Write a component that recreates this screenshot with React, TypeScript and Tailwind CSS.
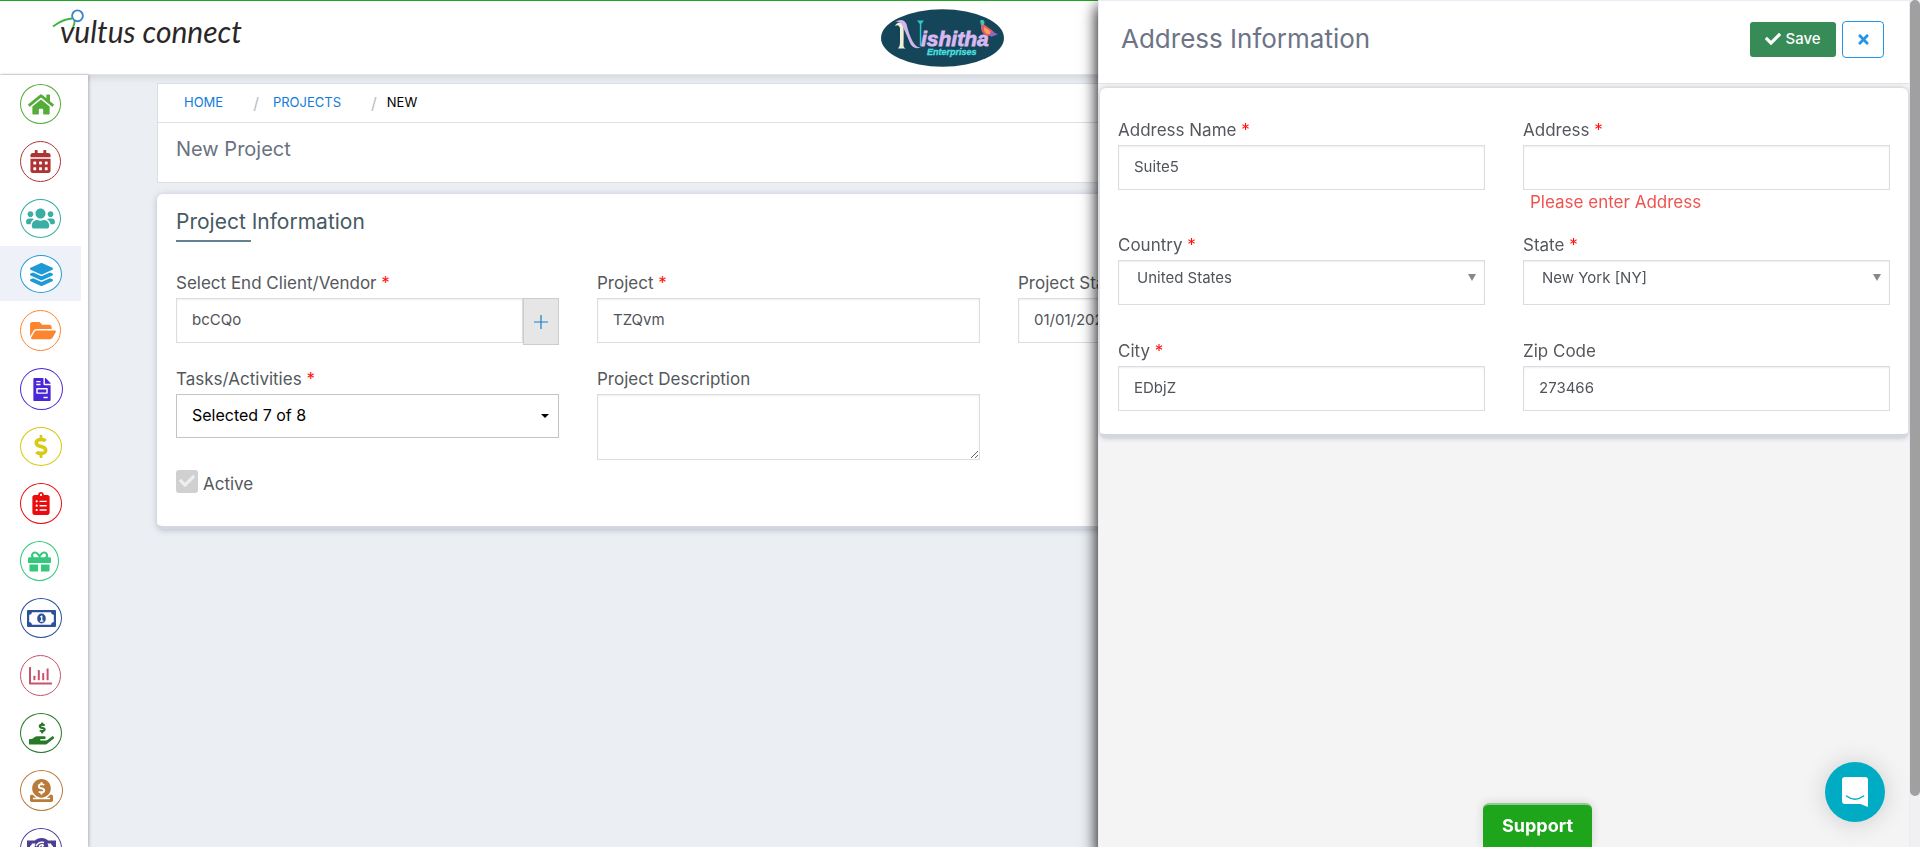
import type { ReactNode } from "react";
import {
  FaHome,
  FaCalendarAlt,
  FaUsers,
  FaLayerGroup,
  FaFolderOpen,
  FaFileInvoice,
  FaDollarSign,
  FaClipboardList,
  FaGift,
  FaHandHoldingUsd,
  FaDonate,
  FaCheck,
  FaTimes,
} from "react-icons/fa";

function MoneyIcon() {
  return (
    <svg viewBox="0 0 29 17" className="h-[17px] w-[29px]" fill="currentColor" aria-hidden="true">
      <path
        fillRule="evenodd"
        d="M1 0H28Q29 0 29 1V16Q29 17 28 17H1Q0 17 0 16V1Q0 0 1 0ZM5 2.2A3 3 0 0 1 2.2 5V12A3 3 0 0 1 5 14.8H24A3 3 0 0 1 26.8 12V5A3 3 0 0 1 24 2.2Z"
      />
      <ellipse cx="14.5" cy="8.5" rx="4.3" ry="5" />
      <path d="M13 6.5L14.6 5.4H15.4V10.6H16.4V11.7H13V10.6H14V7.2L13.4 7.5Z" fill="#fff" />
    </svg>
  );
}

function ChartIcon() {
  return (
    <svg viewBox="0 0 23 18" className="h-[18px] w-[23px]" fill="currentColor" aria-hidden="true">
      <path d="M0 .5Q0 0 .5 0H1.5Q2 0 2 .5V15.6H22.5Q23 15.6 23 16V17Q23 17.6 22.5 17.6H1Q0 17.6 0 16.6Z" />
      <rect x="4.4" y="8.8" width="2" height="4.4" rx=".4" />
      <rect x="8.8" y="3" width="2" height="10.2" rx=".4" />
      <rect x="13.2" y="6" width="2" height="7.2" rx=".4" />
      <rect x="17.6" y="1.4" width="2" height="11.8" rx=".4" />
    </svg>
  );
}

function CashIcon() {
  return (
    <svg viewBox="0 0 29 21" className="h-[21px] w-[29px]" fill="currentColor" aria-hidden="true">
      <path
        fillRule="evenodd"
        d="M0 2.500H8Q10 0 14.5 0Q19 0 21 2.500H29V18H21Q19 21 14.5 21Q10 21 8 18H0ZM5 5.500Q4.500 7.500 3 8V13Q4.500 13.500 5 15H8.500Q6.500 10.500 8.500 5.500ZM24 5.500Q24.500 7.500 26 8V13Q24.500 13.500 24 15H20.500Q22.500 10.500 20.500 5.500Z"
      />
      <path d="M9 8Q12 3 17 4.500M17 7.500Q13 6 12.500 8.500Q12.500 10 14.500 10.500Q17.500 11.300 17 13.500Q16 16 12 14.500M15.500 6V17" fill="none" stroke="#fff" strokeWidth="1.500" />
    </svg>
  );
}

const navItems: { label: string; color: string; size: string; icon: ReactNode; active?: boolean }[] = [
  { label: "Home", color: "text-[#55ac38]", size: "h-[40px] w-[41px]", icon: <FaHome className="h-[23px] w-[26px]" /> },
  { label: "Calendar", color: "text-[#ae3434]", size: "h-[41px] w-[41px]", icon: <FaCalendarAlt className="h-[23px] w-[21px]" /> },
  { label: "Employees", color: "text-[#3aaea3]", size: "h-[39px] w-[41px]", icon: <FaUsers className="h-[23px] w-[29px]" /> },
  { label: "Projects", color: "text-[#1e9bd7]", size: "h-[38px] w-[42px]", icon: <FaLayerGroup className="h-[23px] w-[23px]" />, active: true },
  { label: "Folders", color: "text-[#fd8530]", size: "h-[41px] w-[41px]", icon: <FaFolderOpen className="ml-1 h-[23px] w-[26px]" /> },
  { label: "Invoices", color: "text-[#4a27d6]", size: "h-[42px] w-[43px]", icon: <FaFileInvoice className="h-[23px] w-[18px]" /> },
  { label: "Payments", color: "text-[#d8c913]", size: "h-[39px] w-[42px]", icon: <FaDollarSign className="h-[23px] w-[14px]" /> },
  { label: "Tasks", color: "text-[#ec0c0c]", size: "h-[41px] w-[42px]", icon: <FaClipboardList className="h-[23px] w-[18px]" /> },
  { label: "Benefits", color: "text-[#35c87c]", size: "h-[40px] w-[39px]", icon: <FaGift className="h-[23px] w-[23px]" /> },
  { label: "Payroll", color: "text-[#2c5299]", size: "h-[40px] w-[42px]", icon: <MoneyIcon /> },
  { label: "Reports", color: "text-[#c9516a]", size: "h-[41px] w-[41px]", icon: <ChartIcon /> },
  { label: "Loans", color: "text-[#267a26]", size: "h-[40px] w-[42px]", icon: <FaHandHoldingUsd className="h-[23px] w-[25px]" /> },
  { label: "Donations", color: "text-[#b97a3a]", size: "h-[41px] w-[43px]", icon: <FaDonate className="h-[23px] w-[23px]" /> },
  { label: "Cash", color: "text-[#4d3d96]", size: "h-[41px] w-[42px]", icon: <CashIcon /> },
];

const INPUT =
  "block h-[45px] w-full border border-[#dadde2] bg-white px-[15px] pb-[3px] text-[15px] text-[#50545a] shadow-[inset_0_1px_2px_rgba(0,0,0,0.07)] outline-none";

function Label({ htmlFor, required, children }: { htmlFor: string; required?: boolean; children: ReactNode }) {
  return (
    <label htmlFor={htmlFor} className="block h-[27px] whitespace-nowrap text-[17px] leading-6 text-[#54585c]">
      {children}
      {required && <span className="text-[#ff1010]"> *</span>}
    </label>
  );
}

function SelectField({ id, value }: { id: string; value: string }) {
  return (
    <div className="relative">
      <select id={id} className={INPUT + " appearance-none pl-[18px] pb-[8px]"} defaultValue={value}>
        <option>{value}</option>
      </select>
      <svg viewBox="0 0 8 7" className="pointer-events-none absolute top-[14px] right-[9px] h-[7px] w-2" fill="#888" aria-hidden="true">
        <path d="M0 0H8L4 7Z" />
      </svg>
    </div>
  );
}

function Brand() {
  return (
    <a href="#" className="relative ml-[60px] block justify-self-start pt-[6px] text-[30px] leading-8 text-[#2b2727] italic font-['Lato',sans-serif]">
      vultus connect
      <svg viewBox="0 0 34 20" className="absolute top-0 -left-2 h-5 w-[34px]" fill="none" aria-hidden="true">
        <path d="M1 17.500Q11 10 20 9.500" stroke="#3fb63f" strokeWidth="1.800" />
        <path d="M22.500 11Q23 14.500 21 18" stroke="#3fb63f" strokeWidth="1.800" />
        <circle cx="25.500" cy="6.800" r="5.400" stroke="#3d86c6" strokeWidth="1.900" />
      </svg>
    </a>
  );
}

function CompanyLogo() {
  return (
    <svg viewBox="0 0 123 58" className="h-[58px] w-[123px]" role="img" aria-label="Nishitha Enterprises">
      <ellipse cx="61.500" cy="29" rx="61.500" ry="28.700" fill="#154558" />
      <path d="M14 17Q16 12 22 14Q23 17 22.500 36Q22.500 39 25 39.500H17Q19 38 19 34V19Q18 15 14 17Z" fill="#eef1d6" />
      <path d="M14 13Q22 8 25.500 15Q28 26 32 33Q35 38.500 40 38.500Q32 41 29 34Q24 22 21 16Q19 12 14 13Z" fill="#d3b4ee" />
      <path d="M36 11.500H43L40.300 15V37H38.800V15Z" fill="#35c5cf" />
      <text
        x="40"
        y="37"
        fontFamily="Liberation Sans, sans-serif"
        fontSize="21"
        fontWeight="700"
        fontStyle="italic"
        fill="#d9b8f2"
        stroke="#d9b8f2"
        strokeWidth=".8"
      >
        ishitha
      </text>
      <text x="46" y="46" fontFamily="Liberation Sans, sans-serif" fontSize="9" fontWeight="700" fontStyle="italic" fill="#4be0e0" stroke="#4be0e0" strokeWidth=".3">
        Enterprises
      </text>
      <path d="M99 12Q102 9 103.500 13L103 17L100 16Z" fill="#3fc4b4" />
      <path d="M100 16L104 16Q110 20 116 26L107 27Q99 25 100 16Z" fill="#e9586a" />
      <path d="M103 18Q108 20 111 25L106 25Q102 22 103 18Z" fill="#f3a25c" />
      <path d="M109 23L117 25L110 28Z" fill="#7d6bd0" />
    </svg>
  );
}

function Sidebar() {
  return (
    <nav aria-label="Main" className="relative z-10 w-[88px] shrink-0 overflow-hidden bg-white shadow-[1px_0_3px_rgba(0,0,0,0.25)]">
      {navItems.map((item) => (
        <a
          key={item.label}
          href="#"
          aria-label={item.label}
          className={"block w-[81px] pt-[9px] pb-2 pl-5 " + item.color + (item.active ? " bg-[#eff1f8]" : "")}
        >
          <span className={"flex items-center justify-center rounded-[50%] border border-current bg-white " + item.size}>{item.icon}</span>
        </a>
      ))}
    </nav>
  );
}

function ProjectForm() {
  return (
    <section className="mt-[11px] rounded-md border-b-[3px] border-[#d3d7df] bg-white px-[19px] pt-3 shadow-[0_1px_6px_rgba(60,70,90,0.3)]">
      <h2 className="h-[34px] text-[21px] leading-8 text-[#475a64]">Project Information</h2>
      <div className="h-[2px] w-[75px] bg-[#64828f]" />
      <div className="mt-[29px] grid grid-cols-4 gap-x-[38px] gap-y-6">
        <div>
          <Label htmlFor="client" required>Select End Client/Vendor</Label>
          <div className="flex h-[45px]">
            <input id="client" className={INPUT + " min-w-0 flex-1"} defaultValue="bcCQo" />
            <button type="button" aria-label="Add client" className="flex h-[47px] w-9 items-center justify-center border border-[#ccc] bg-[#e6e6e6] text-[#1c7fc4]">
              <svg viewBox="0 0 14 14" className="h-[14px] w-[14px]" stroke="currentColor" strokeWidth="1.200" aria-hidden="true">
                <path d="M7 0V14M0 7H14" />
              </svg>
            </button>
          </div>
        </div>
        <div>
          <Label htmlFor="project" required>Project</Label>
          <input id="project" className={INPUT} defaultValue="TZQvm" />
        </div>
        <div>
          <Label htmlFor="start" required>Project Start Date</Label>
          <input id="start" className={INPUT} defaultValue="01/01/2024" />
        </div>
        <div className="col-start-1">
          <Label htmlFor="tasks" required>Tasks/Activities</Label>
          <div className="relative">
            <select id="tasks" className="block h-11 w-full appearance-none border border-[#c4c4c4] bg-white px-[15px] pb-[2px] text-base text-black outline-none">
              <option>Selected 7 of 8</option>
            </select>
            <svg viewBox="0 0 8 4" className="pointer-events-none absolute top-5 right-[10px] h-1 w-2" aria-hidden="true">
              <path d="M0 0H8L4 4Z" />
            </svg>
          </div>
        </div>
        <div>
          <Label htmlFor="description">Project Description</Label>
          <textarea id="description" className={INPUT + " h-[66px] resize"} />
        </div>
      </div>
      <div className="flex pt-[10px] pb-[30px]">
        <input id="active" type="checkbox" defaultChecked disabled className="h-[23px] w-[22px] appearance-none rounded-[3px] bg-[#d0d0d0]" />
        <FaCheck className="pointer-events-none -ml-[19px] mt-[3px] h-4 w-4 text-[#eee]" aria-hidden="true" />
        <label htmlFor="active" className="pt-[2px] pl-2 text-[17px] leading-6 text-[#54585c]">Active</label>
      </div>
    </section>
  );
}

function AddressPanel() {
  return (
    <aside aria-label="Address Information" className="fixed inset-y-0 right-0 z-20 flex w-[822px] bg-[#f4f4f4] shadow-[0_8px_14px_2px_rgba(0,0,0,0.85)]">
      <div className="min-w-0 flex-1 border-x border-t border-[#ececf8]">
        <header className="flex h-[83px] items-center justify-between border-b border-[#e0e2e8] bg-white pr-[25px] pb-[6px] pl-[22px]">
          <h1 className="text-[26px] leading-9 text-[#6c7486]">Address Information</h1>
          <div className="flex items-center gap-[6px]">
            <button type="button" className="flex h-[35px] w-[86px] items-center justify-center gap-1 rounded-[3px] bg-[#378b57] text-[15px] font-medium text-white">
              <FaCheck className="h-4 w-4" aria-hidden="true" />
              Save
            </button>
            <button type="button" aria-label="Close" className="flex h-[37px] w-[42px] items-center justify-center rounded-[4px] border border-[#2196e8] bg-white text-[#2196e8]">
              <FaTimes className="h-[15px] w-[15px]" />
            </button>
          </div>
        </header>
        <div className="mx-px mt-1 rounded-md border-b-4 border-[#d3d7df] bg-white px-[18px] pt-[30px] pb-[23px] shadow-[0_0_5px_rgba(60,70,90,0.3)]">
          <div className="grid grid-cols-2 gap-x-[38px]">
            <div>
              <Label htmlFor="address-name" required>Address Name</Label>
              <input id="address-name" className={INPUT} defaultValue="Suite5" />
            </div>
            <div>
              <Label htmlFor="address" required>Address</Label>
              <input id="address" className={INPUT} aria-invalid="true" aria-describedby="address-error" />
              <p id="address-error" className="h-[25px] pl-[7px] text-[17px] leading-6 text-[#ef5350]">Please enter Address</p>
            </div>
          </div>
          <div className="mt-[18px] grid grid-cols-2 gap-x-[38px]">
            <div>
              <Label htmlFor="country" required>Country</Label>
              <SelectField id="country" value="United States" />
            </div>
            <div>
              <Label htmlFor="state" required>State</Label>
              <SelectField id="state" value="New York [NY]" />
            </div>
          </div>
          <div className="mt-[34px] grid grid-cols-2 gap-x-[38px]">
            <div>
              <Label htmlFor="city" required>City</Label>
              <input id="city" className={INPUT} defaultValue="EDbjZ" />
            </div>
            <div>
              <Label htmlFor="zip">Zip Code</Label>
              <input id="zip" className={INPUT} defaultValue="273466" />
            </div>
          </div>
        </div>
      </div>
      <div className="w-[10px] shrink-0 bg-[#f0f0f2]" aria-hidden="true">
        <div className="h-[94%] rounded-full bg-[#a0a0a0]" />
      </div>
    </aside>
  );
}

export default function App() {
  return (
    <div className="flex h-screen flex-col overflow-hidden bg-[#ebeff4] font-['Inter',sans-serif]">
      <header className="relative z-10 grid h-[75px] shrink-0 grid-cols-[1fr_auto_1fr] border-t border-b border-t-[#1fa51f] border-b-[#e2e4e8] bg-white pt-2 pr-[36px] shadow-[0_2px_8px_rgba(0,0,0,0.12)]">
        <Brand />
        <CompanyLogo />
      </header>
      <div className="flex min-h-0 flex-1">
        <Sidebar />
        <main className="min-w-0 flex-1 pt-2 pr-[79px] pl-[69px]">
          <div className="border border-[#dcdfe4] bg-white">
            <nav aria-label="Breadcrumb" className="border-b border-[#dcdfe4]">
              <ol className="flex h-[38px] items-center pl-[26px] text-[13px] text-[#0f7bdc]">
                <li><a href="#">HOME</a></li>
                <li className="ml-[30px] flex items-center">
                  <span className="mr-[14px] text-base text-[#b8bcc2]">/</span>
                  <a href="#">PROJECTS</a>
                </li>
                <li className="ml-[30px] flex items-center text-black" aria-current="page">
                  <span className="mr-[10px] text-base text-[#b8bcc2]">/</span>
                  NEW
                </li>
              </ol>
            </nav>
            <p className="h-[59px] pt-[10px] pl-[18px] text-xl leading-8 text-[#6b7280]">New Project</p>
          </div>
          <ProjectForm />
        </main>
      </div>
      <AddressPanel />
      <button type="button" className="fixed right-[328px] bottom-0 z-30 h-11 w-[109px] rounded-t-md border-t-2 border-[#90cc90] bg-[#1fa51c] text-lg font-bold text-white shadow-[0_0_10px_rgba(0,0,0,0.15)]">
        Support
      </button>
      <button type="button" aria-label="Open chat" className="fixed right-[35px] bottom-[25px] z-30 flex h-[60px] w-[60px] items-center justify-center rounded-full bg-[#00acc4] shadow-[0_1px_24px_rgba(0,0,0,0.16)]">
        <svg viewBox="0 0 26 30" className="h-[30px] w-[26px]" aria-hidden="true">
          <path d="M3 0H23Q26 0 26 3V30L18.500 27H3Q0 27 0 24V3Q0 0 3 0Z" fill="#fff" />
          <path d="M4.500 19Q13 25.500 21.500 19" fill="none" stroke="#00acc4" strokeWidth="1.500" strokeLinecap="round" />
        </svg>
      </button>
    </div>
  );
}
